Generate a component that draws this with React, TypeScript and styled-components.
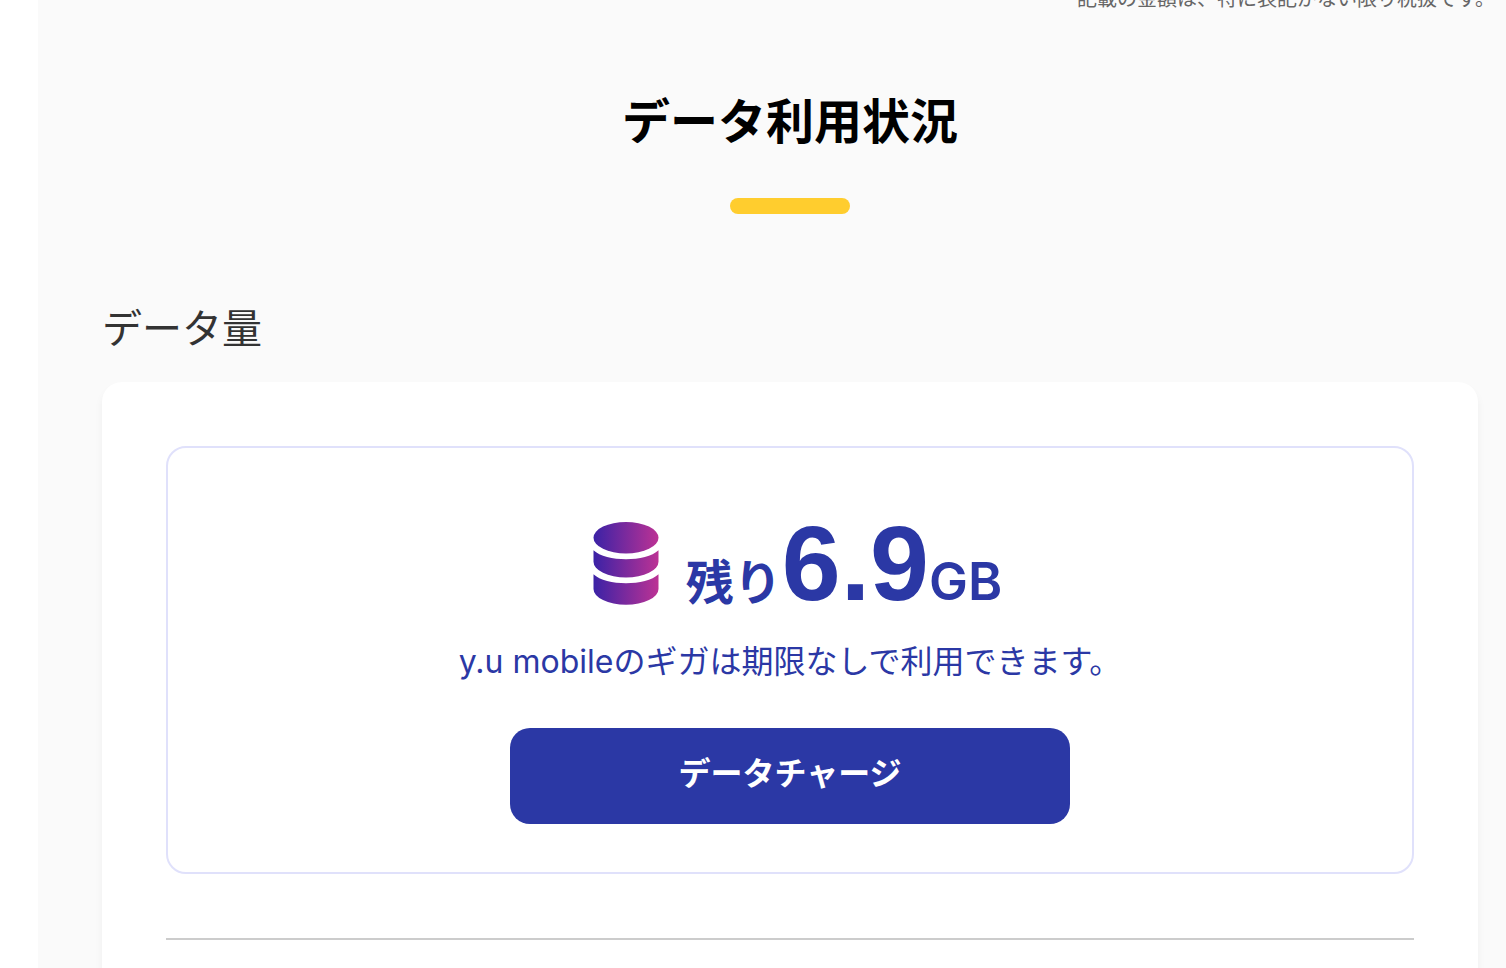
import React from "react";
import styled, { createGlobalStyle } from "styled-components";

const GlobalStyle = createGlobalStyle`
  * { box-sizing: border-box; }
  body {
    margin: 0;
    background: #fff;
    color: #333;
    font-family: "Liberation Sans", "Noto Sans CJK JP", sans-serif;
  }
`;

const NAVY = "#2b38a5";

const Page = styled.main`
  display: flex;
  flex-direction: column;
  min-height: 100vh;
  margin-left: 38px;
  padding: 0 28px 0 64px;
  background: #fafafa;
`;

const TaxNote = styled.div`
  display: flex;
  align-items: flex-end;
  justify-content: flex-end;
  height: 12px;
  margin-right: -17px;
  overflow: hidden;
  color: #666;
  font-size: 20px;
  line-height: 26px;
  white-space: nowrap;
`;

const PageTitle = styled.h1`
  display: flex;
  flex-direction: column;
  align-items: center;
  gap: 39px;
  margin: 75px 0 0;
  color: #000;
  font-size: 48px;
  line-height: 72px;

  &::after {
    content: "";
    width: 120px;
    height: 16px;
    border-radius: 8px;
    background: #ffcd2e;
  }
`;

const SectionTitle = styled.h2`
  margin: 85px 0 23px;
  font-size: 40px;
  font-weight: 400;
  line-height: 60px;
`;

const Card = styled.section`
  flex: 1;
  padding: 64px 64px 28px;
  border-radius: 20px 20px 0 0;
  background: #fff;
  box-shadow: 0 6px 8px rgba(0, 0, 0, 0.05);
`;

const BalanceBox = styled.div`
  display: flex;
  flex-direction: column;
  align-items: center;
  padding: 64px 32px 48px;
  border: 2px solid #e0e1fb;
  border-radius: 20px;
  color: ${NAVY};
`;

const Balance = styled.div`
  display: flex;
  align-items: center;
  gap: 10px;
  height: 104px;
  padding-right: 2px;
`;

const Amount = styled.p`
  display: flex;
  align-items: baseline;
  margin: 0;
  padding-top: 18px;
  font-weight: 700;
  line-height: 104px;
`;

const AmountPart = styled.span<{ $size: number }>`
  font-size: ${({ $size }) => $size}px;
`;

const Unit = styled.span`
  font-family: Inter, sans-serif;
  font-size: 52px;
  font-weight: 600;
`;

const Description = styled.p`
  margin: 22px 0 0;
  font-family: Inter, "Noto Sans CJK JP", sans-serif;
  font-size: 32px;
  line-height: 48px;
`;

const ChargeButton = styled.button`
  width: 560px;
  max-width: 100%;
  height: 96px;
  margin-top: 42px;
  padding: 0 16px 10px;
  border: 0;
  border-radius: 20px;
  background: ${NAVY};
  color: #fff;
  font: inherit;
  font-size: 32px;
  font-weight: 700;
  cursor: pointer;
`;

const Divider = styled.hr`
  height: 2px;
  margin: 64px 0 0;
  border: 0;
  background: #ccc;
`;

function DataIcon() {
  return (
    <svg width="100" height="84" viewBox="0 0 100 84" aria-hidden="true">
      <defs>
        <linearGradient id="dataGradient" gradientUnits="userSpaceOnUse" x1="17" y1="0" x2="83" y2="0">
          <stop offset="0" stopColor="#3a22a6" />
          <stop offset="1" stopColor="#bd3294" />
        </linearGradient>
      </defs>
      <g fill="url(#dataGradient)">
        <ellipse cx="50" cy="15.7" rx="32.5" ry="15.7" />
        <path d="M17.5 28.2C30 40.2 70 40.2 82.5 28.2V39.7A32.5 15.7 0 0 1 17.5 39.7Z" />
        <path d="M17.5 52.2C30 64.2 70 64.2 82.5 52.2V67A32.5 15.7 0 0 1 17.5 67Z" />
      </g>
    </svg>
  );
}

export default function App() {
  return (
    <>
      <GlobalStyle />
      <Page>
        <TaxNote>記載の金額は、特に表記がない限り税抜です。</TaxNote>
        <PageTitle>データ利用状況</PageTitle>
        <SectionTitle>データ量</SectionTitle>
        <Card>
          <BalanceBox>
            <Balance>
              <DataIcon />
              <Amount>
                <AmountPart $size={48}>残り</AmountPart>
                <AmountPart $size={106}>6.9</AmountPart>
                <Unit>GB</Unit>
              </Amount>
            </Balance>
            <Description>y.u mobileのギガは期限なしで利用できます。</Description>
            <ChargeButton type="button">データチャージ</ChargeButton>
          </BalanceBox>
          <Divider />
        </Card>
      </Page>
    </>
  );
}
